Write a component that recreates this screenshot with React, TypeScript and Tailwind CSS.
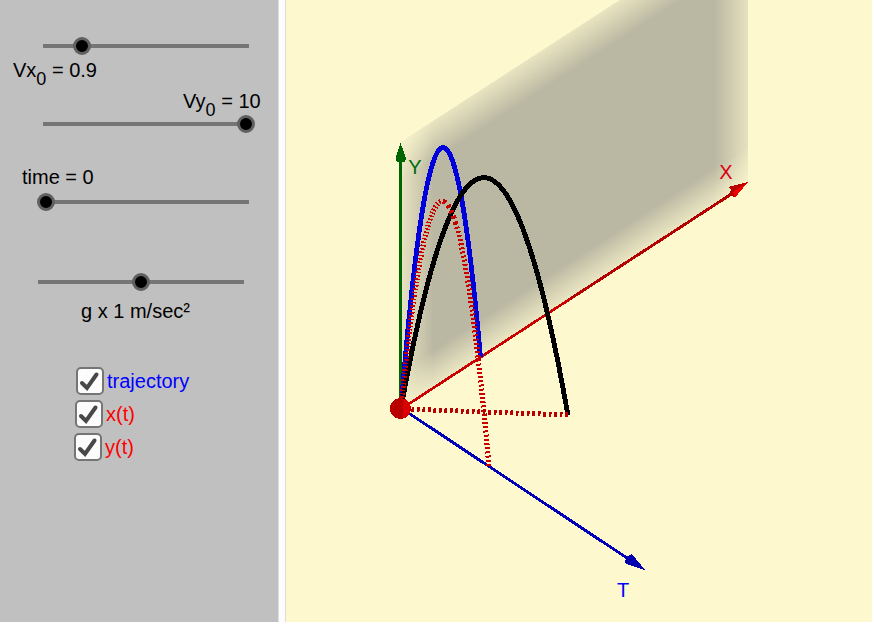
import { useState } from 'react';
import type { ReactNode } from 'react';

type Point = [number, number];

const ORIGIN: Point = [401, 408];

/** Samples part of a quadratic arc that starts at the origin. */
function arc(control: Point, end: Point, from = 0, to = 1) {
  const steps = 60;
  const points: string[] = [];
  for (let i = 0; i <= steps; i++) {
    const t = from + ((to - from) * i) / steps;
    const a = (1 - t) * (1 - t);
    const b = 2 * t * (1 - t);
    const c = t * t;
    const x = a * ORIGIN[0] + b * control[0] + c * end[0];
    const y = a * ORIGIN[1] + b * control[1] + c * end[1];
    points.push(`${x.toFixed(2)},${y.toFixed(2)}`);
  }
  return points.join(' ');
}

function Slider(props: { id: string; max: number; step: number; initial: number }) {
  const [value, setValue] = useState(props.initial);
  return (
    <input
      id={props.id}
      type="range"
      min={0}
      max={props.max}
      step={props.step}
      value={value}
      onChange={(e) => setValue(Number(e.target.value))}
      className="block h-[18px] w-[218px] cursor-pointer appearance-none bg-transparent bg-[linear-gradient(#757575,#757575)] bg-[length:206px_4px] bg-center bg-no-repeat [&::-webkit-slider-thumb]:size-[18px] [&::-webkit-slider-thumb]:appearance-none [&::-webkit-slider-thumb]:rounded-full [&::-webkit-slider-thumb]:border-[3px] [&::-webkit-slider-thumb]:border-[#606060] [&::-webkit-slider-thumb]:bg-black"
    />
  );
}

function Check(props: { className: string; checked: boolean; onChange: (v: boolean) => void; children: ReactNode }) {
  return (
    <label className={`flex cursor-pointer items-center gap-[3px] ${props.className}`}>
      <span className="grid size-7 place-items-center">
        <input
          type="checkbox"
          checked={props.checked}
          onChange={(e) => props.onChange(e.target.checked)}
          className="peer col-start-1 row-start-1 size-7 appearance-none rounded-[5px] border-2 border-[#757575] bg-[#fcfcfc]"
        />
        <svg
          viewBox="0 0 28 28"
          className="pointer-events-none invisible col-start-1 row-start-1 size-7 peer-checked:visible"
          fill="none"
          stroke="#484848"
          strokeWidth="4"
          strokeLinecap="round"
          strokeLinejoin="miter"
        >
          <path d="M6 16 L11 21 L20.5 7.5" />
        </svg>
      </span>
      <span>{props.children}</span>
    </label>
  );
}

function Plot(props: { trajectory: boolean; xt: boolean; yt: boolean }) {
  const yControl: Point = [445, -33];
  const yEnd: Point = [489, 467];
  return (
    <svg
      viewBox="286 0 586 622"
      preserveAspectRatio="xMinYMin meet"
      className="block h-full w-full"
      shapeRendering="crispEdges"
      role="img"
      aria-label="Projectile motion in X, Y and T"
    >
      <defs>
        <linearGradient id="fadeX" gradientUnits="userSpaceOnUse" x1="0" x2="348" y1="0" y2="0">
          <stop offset="0" stopColor="#fff" stopOpacity="0.3" />
          <stop offset="0.095" stopColor="#fff" />
          <stop offset="0.905" stopColor="#fff" />
          <stop offset="1" stopColor="#fff" stopOpacity="0.35" />
        </linearGradient>
        <linearGradient id="fadeY" gradientUnits="userSpaceOnUse" x1="0" x2="0" y1="0" y2="267">
          <stop offset="0" stopColor="#fff" stopOpacity="0.3" />
          <stop offset="0.15" stopColor="#fff" />
          <stop offset="0.86" stopColor="#fff" />
          <stop offset="1" stopColor="#fff" stopOpacity="0.25" />
        </linearGradient>
        <mask id="maskX" maskUnits="userSpaceOnUse" x="0" y="0" width="348" height="267">
          <rect width="348" height="267" fill="url(#fadeX)" />
        </mask>
        <mask id="maskY" maskUnits="userSpaceOnUse" x="0" y="0" width="348" height="267">
          <rect width="348" height="267" fill="url(#fadeY)" />
        </mask>
      </defs>

      <g transform="matrix(1 -0.648 0 1 400 142)">
        <g mask="url(#maskX)">
          <g mask="url(#maskY)">
            <rect width="348" height="267" fill="#bab8a2" />
          </g>
        </g>
      </g>

      <line x1="400.5" y1="408" x2="400.5" y2="160" stroke="#006400" strokeWidth="3" />
      <path d="M400.5 143 L406 158 L405 162 L397 162 L395.500 158 Z" fill="#006400" />

      <line x1="401" y1="409" x2="570" y2="299" stroke="#cc0000" strokeWidth="2.700" />
      <line x1="570" y1="299" x2="733" y2="193" stroke="#b40000" strokeWidth="2.900" />
      <path d="M748 182 L728 187 L731 190 L729 194 L735 197.500 Z" fill="#b80000" />
      <path d="M748 182 L733 192 L735 197.500 Z" fill="#f00000" />

      <line x1="401" y1="408" x2="630" y2="560" stroke="#0000b8" strokeWidth="2.900" />
      <path d="M645 570 L632 554 L626 557 L625 563 L629 565 Z" fill="#0000b0" />

      {props.trajectory && (
        <polyline points={arc([441, -86], [480.5, 357])} fill="none" stroke="#0000dc" strokeWidth="4.800" />
      )}
      <polyline points={arc([484.5, -56.5], [568, 415.5])} fill="none" stroke="#000" strokeWidth="4.900" />
      {props.yt && (
        <g fill="none" stroke="#c80000" strokeWidth="5.200">
          <polyline points={arc(yControl, yEnd, 0, 0.48)} strokeDasharray="1.5 1.9" />
          <polyline points={arc(yControl, yEnd, 0.48, 0.62)} strokeDasharray="3 3" />
          <polyline points={arc(yControl, yEnd, 0.62, 1)} strokeDasharray="2 2.2" />
        </g>
      )}
      {props.xt && (
        <line x1="406" y1="409" x2="568" y2="415" stroke="#b80000" strokeWidth="5" strokeDasharray="2.6 2.9" />
      )}

      <circle cx="400.5" cy="408.500" r="10.500" fill="#b80000" />
      <path d="M403 398.500 A10.500 10.500 0 0 1 403 418.500 Z" fill="#dc0000" />

      <g fontSize="20" textAnchor="middle">
        <text x="415" y="174" fill="#006c10">Y</text>
        <text x="726" y="179" fill="#dc0010">X</text>
        <text x="623" y="597" fill="#0000ff">T</text>
      </g>
    </svg>
  );
}

export default function App() {
  const [trajectory, setTrajectory] = useState(true);
  const [xt, setXt] = useState(true);
  const [yt, setYt] = useState(true);

  return (
    <main className="flex h-screen bg-white pr-0.5 pb-0.5 font-['Liberation_Sans',Arial,sans-serif] text-[20px] leading-6 text-black">
      <aside className="flex w-[279px] shrink-0 flex-col items-start border-r border-[#e0e0e0] bg-[#c0c0c0]">
        <div className="mt-[37px] ml-[37px]">
          <Slider id="vx" max={5} step={0.1} initial={0.9} />
        </div>
        <label htmlFor="vx" className="mt-[3px] ml-[13px]">
          Vx<sub className="bottom-0 align-[-8px] text-[18px] leading-[0]">0</sub> = 0.9
        </label>

        <label htmlFor="vy" className="mt-[7px] ml-[183px]">
          Vy<sub className="bottom-0 align-[-8px] text-[18px] leading-[0]">0</sub> = 10
        </label>
        <div className="mt-0.5 ml-[37px]">
          <Slider id="vy" max={10} step={0.1} initial={10} />
        </div>

        <label htmlFor="time" className="mt-8 ml-[22px]">time = 0</label>
        <div className="mt-1 ml-[37px]">
          <Slider id="time" max={10} step={0.1} initial={0} />
        </div>

        <div className="mt-[62px] ml-8">
          <Slider id="gravity" max={2} step={0.1} initial={1} />
        </div>
        <label htmlFor="gravity" className="mt-2 ml-[81px]">g x 1 m/sec²</label>

        <div className="mt-11 flex flex-col gap-[5px]">
          <Check className="ml-[76px] text-[#0000ff]" checked={trajectory} onChange={setTrajectory}>
            trajectory
          </Check>
          <Check className="ml-[75px] text-[#ff0000]" checked={xt} onChange={setXt}>
            x(t)
          </Check>
          <Check className="ml-[74px] text-[#ff0000]" checked={yt} onChange={setYt}>
            y(t)
          </Check>
        </div>
      </aside>
      <div className="w-1.5 shrink-0 bg-[#fcfcfc]" />
      <section className="min-w-0 flex-1 border-l border-[#dcdcdc] bg-[#fef8cf]">
        <Plot trajectory={trajectory} xt={xt} yt={yt} />
      </section>
    </main>
  );
}
